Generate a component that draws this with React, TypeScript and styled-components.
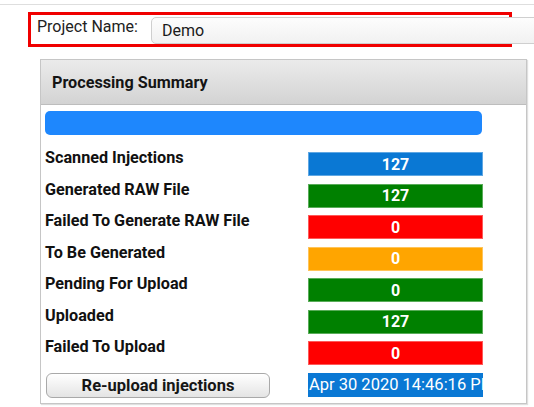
import styled, { createGlobalStyle } from 'styled-components';

type Stat = {
  label: string;
  value: number;
  colour: string;
};

const stats: Stat[] = [
  { label: 'Scanned Injections', value: 127, colour: '#0a78d4' },
  { label: 'Generated RAW File', value: 127, colour: '#008000' },
  { label: 'Failed To Generate RAW File', value: 0, colour: '#ff0000' },
  { label: 'To Be Generated', value: 0, colour: '#ffa500' },
  { label: 'Pending For Upload', value: 0, colour: '#008000' },
  { label: 'Uploaded', value: 127, colour: '#008000' },
  { label: 'Failed To Upload', value: 0, colour: '#ff0000' },
];

const GlobalStyle = createGlobalStyle`
  html, body {
    margin: 0;
    padding: 0;
    background: #ffffff;
    overflow: hidden;
    font-family: Roboto, 'Liberation Sans', Arial, sans-serif;
    color: #111;
  }
`;

const Page = styled.div`
  width: 534px;
  height: 407px;
  overflow: hidden;
`;

const TopRule = styled.div`
  height: 4px;
  border-bottom: 1px solid #dedede;
`;

const ProjectRow = styled.div`
  margin: 7px 0 0 28px;
  width: 478px;
  height: 29px;
  border: 3px solid #f00000;
  display: flex;
  align-items: center;
  overflow: visible;
`;

const ProjectLabel = styled.label`
  width: 114px;
  padding-left: 6px;
  font-size: 16px;
  color: #222;
  margin-top: -6px;
  flex-shrink: 0;
`;

const ProjectInput = styled.div`
  flex-shrink: 0;
  width: 420px;
  height: 27px;
  margin-top: 2px;
  box-sizing: border-box;
  border: 1px solid #cfcfcf;
  border-radius: 5px 0 0 5px;
  background: linear-gradient(#fdfdfd, #f1f1f1);
  display: flex;
  align-items: center;
  padding-left: 10px;
  font-size: 16px;
  color: #1a1a1a;
`;

const Panel = styled.div`
  margin: 12px 0 0 40px;
  width: 487px;
  height: 345px;
  box-sizing: border-box;
  border: 1px solid #c6c6c6;
  box-shadow: 1px 1px 1px rgba(0, 0, 0, 0.12);
`;

const PanelHeader = styled.div`
  height: 44px;
  border-bottom: 1px solid #bdbdbd;
  background: linear-gradient(#ebebeb, #d3d3d3);
  display: flex;
  align-items: center;
  padding-left: 11px;
  font-size: 16.2px;
  font-weight: 700;
  color: #141414;
`;

const PanelBody = styled.div`
  padding: 6px 0 0 4px;
  display: flex;
  flex-direction: column;
`;

const ProgressBar = styled.div`
  width: 437px;
  height: 24px;
  border-radius: 5px;
  background: #1e87fd;
  margin-bottom: 17px;
`;

const Rows = styled.div`
  display: flex;
  flex-direction: column;
  gap: 7.5px;
`;

const Row = styled.div`
  display: flex;
  align-items: flex-start;
  height: 24px;
`;

const RowLabel = styled.div`
  width: 263px;
  font-size: 16.2px;
  font-weight: 700;
  line-height: 18px;
  margin-top: -3px;
  color: #111;
  white-space: nowrap;
`;

const ValueBox = styled.div<{ $colour: string }>`
  width: 175px;
  height: 24px;
  box-sizing: border-box;
  background: ${(p) => p.$colour};
  border: 1px solid rgba(255, 255, 255, 0.35);
  color: #fff;
  font-size: 16px;
  font-weight: 700;
  display: flex;
  align-items: center;
  justify-content: center;
`;

const ReuploadButton = styled.button`
  width: 224px;
  height: 25px;
  margin: 0 38px 0 1px;
  border: 1px solid #a9a9a9;
  border-radius: 6px;
  background: linear-gradient(#ffffff, #e4e4e4);
  font-family: Roboto, 'Liberation Sans', Arial, sans-serif;
  font-size: 16.5px;
  font-weight: 700;
  color: #161616;
  padding: 0;
`;

const DateBox = styled.div`
  width: 175px;
  height: 24px;
  background: #0a78d4;
  color: #fff;
  font-size: 16.5px;
  line-height: 23px;
  white-space: nowrap;
  overflow: hidden;
  padding-left: 1px;
  box-sizing: border-box;
`;

export default function App() {
  return (
    <Page>
      <GlobalStyle />
      <TopRule />
      <ProjectRow>
        <ProjectLabel>Project Name:</ProjectLabel>
        <ProjectInput>Demo</ProjectInput>
      </ProjectRow>
      <Panel>
        <PanelHeader>Processing Summary</PanelHeader>
        <PanelBody>
          <ProgressBar />
          <Rows>
            {stats.map((s) => (
              <Row key={s.label}>
                <RowLabel>{s.label}</RowLabel>
                <ValueBox $colour={s.colour}>{s.value}</ValueBox>
              </Row>
            ))}
            <Row>
              <ReuploadButton>Re-upload injections</ReuploadButton>
              <DateBox>Apr 30 2020 14:46:16 PM</DateBox>
            </Row>
          </Rows>
        </PanelBody>
      </Panel>
    </Page>
  );
}
